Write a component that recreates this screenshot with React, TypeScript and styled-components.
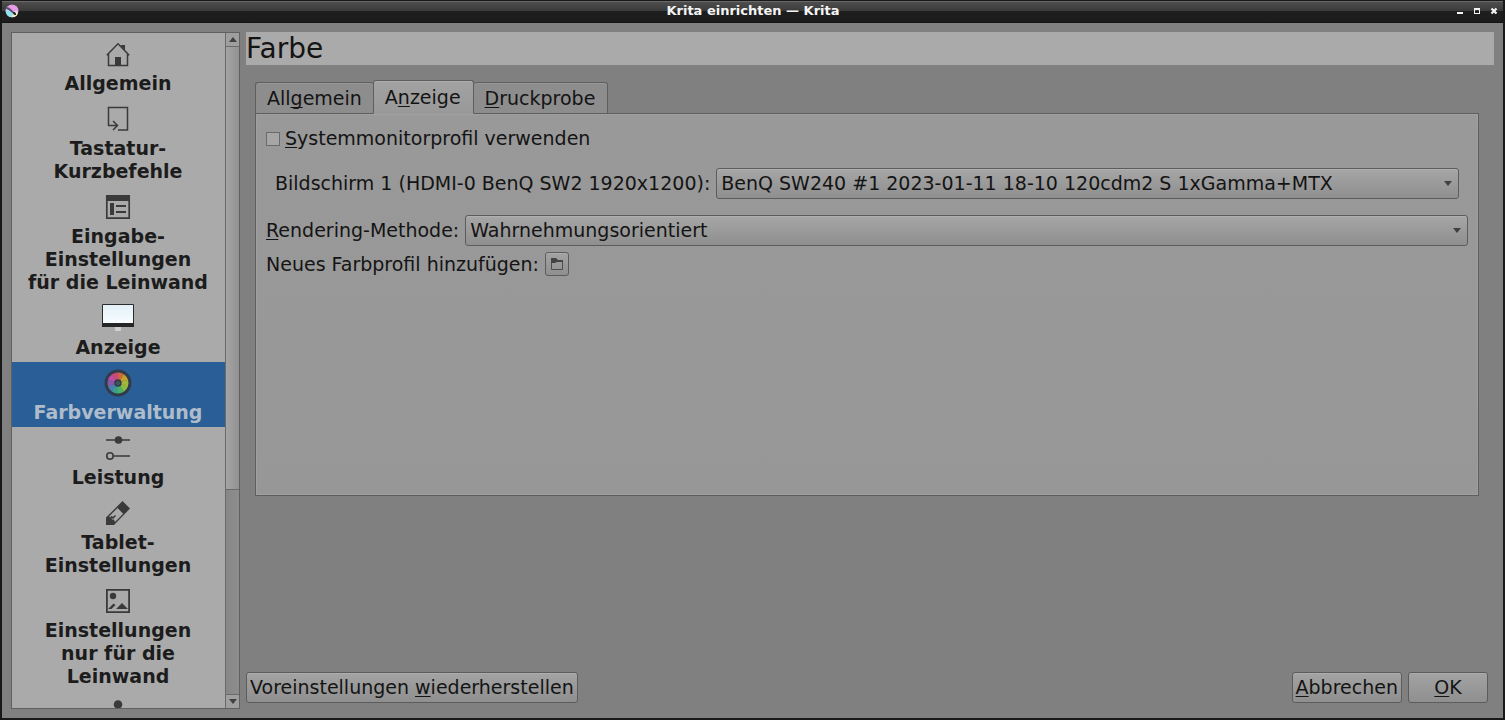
import React, { useState } from "react";
import styled, { createGlobalStyle } from "styled-components";

const GlobalStyle = createGlobalStyle`
  * { box-sizing: border-box; }
  body {
    margin: 0;
    background: #808080;
    color: #141414;
    font-family: "DejaVu Sans", sans-serif;
    font-size: 19px;
    line-height: 23px;
  }
  button, select, input { font: inherit; color: inherit; margin: 0; }
`;

const Frame = styled.div`
  height: 100vh;
  display: flex;
  flex-direction: column;
  border: solid #191919;
  border-width: 0 2px 2px;
  background: #808080;
`;

const TitleBar = styled.header`
  flex: none;
  height: 23px;
  display: flex;
  align-items: center;
  padding: 0 2px 2px 3px;
  border-top: 1px solid #181818;
  border-bottom: 1px solid #141414;
  background: linear-gradient(#6a6a6a 0 1px, #4e4e4e 1px, #3a3a3a 10px, #1f1f1f 10px, #1b1b1b);
  color: #f4f4f4;
`;

const TitleSide = styled.div<{ $end?: boolean }>`
  flex: 1;
  display: flex;
  align-items: center;
  justify-content: ${(p) => (p.$end ? "flex-end" : "flex-start")};
  gap: 3px;
`;

const WindowTitle = styled.div`
  font-size: 13px;
  font-weight: bold;
  line-height: 16px;
`;

const WindowButton = styled.button`
  width: 14px;
  height: 14px;
  padding: 0;
  border: 0;
  background: none;
  display: grid;
  place-items: center;
`;

const Body = styled.div`
  flex: 1;
  min-height: 0;
  display: flex;
  gap: 6px;
  padding: 9px;
`;

const Sidebar = styled.nav`
  flex: none;
  width: 229px;
  display: flex;
  border: 1px solid #606060;
  background: #aaaaaa;
`;

const PageList = styled.div`
  flex: 1;
  overflow: hidden;
`;

const PageItem = styled.button<{ $active: boolean }>`
  width: 100%;
  display: flex;
  flex-direction: column;
  align-items: center;
  gap: 2px;
  padding: 5px 13px 3px 12px;
  border: 0;
  background: ${(p) => (p.$active ? "#295f96" : "transparent")};
  color: ${(p) => (p.$active ? "#aebccb" : "#1c1c1c")};
  font-weight: bold;
  text-align: center;
  white-space: pre-line;

  svg { display: block; }
`;

const ScrollBar = styled.div`
  flex: none;
  width: 14px;
  display: flex;
  flex-direction: column;
  border-left: 1px solid #6a6a6a;
  background: #8a8a8a;
`;

const ScrollArrow = styled.button<{ $down?: boolean }>`
  flex: none;
  height: 14px;
  padding: 0;
  border: solid #6a6a6a;
  border-width: ${(p) => (p.$down ? "1px 0 0" : "0 0 1px")};
  background: #9f9f9f;
  display: grid;
  place-items: center;
`;

const ScrollThumb = styled.div`
  flex: 443;
  border-bottom: 1px solid #6a6a6a;
  background: linear-gradient(90deg, #a4a4a4, #929292);
`;

const ScrollTrough = styled.div`
  flex: 204;
  background: linear-gradient(90deg, #868686, #8e8e8e);
`;

const Main = styled.main`
  flex: 1;
  min-width: 0;
  display: flex;
  flex-direction: column;
`;

const PageTitle = styled.h1`
  margin: 0;
  background: #aaaaaa;
  font-size: 28px;
  font-weight: normal;
  line-height: 33px;
`;

const TabArea = styled.section`
  flex: 1;
  padding: 15px 15px 0 9px;
`;

const TabList = styled.div`
  display: flex;
  align-items: flex-end;
  margin-bottom: -1px;
`;

const Tab = styled.button<{ $active: boolean }>`
  height: ${(p) => (p.$active ? 34 : 32)}px;
  padding: 0 11px;
  position: relative;
  border: solid #5e5e5e;
  border-width: ${(p) => (p.$active ? "1px" : "1px 0 1px 1px")};
  border-bottom-color: ${(p) => (p.$active ? "#999999" : "#5e5e5e")};
  border-radius: 3px 3px 0 0;
  background: ${(p) => (p.$active ? "linear-gradient(#a2a2a2, #999999)" : "#8d8d8d")};
  box-shadow: inset 0 1px ${(p) => (p.$active ? "#adadad" : "#989898")};

  & + & { padding: 0 12px 0 11px; }
  &:last-child { border-width: 1px 1px 1px 0; }
`;

const Panel = styled.div`
  min-height: 383px;
  padding: 13px 10px;
  display: flex;
  flex-direction: column;
  border: 1px solid #5e5e5e;
  background: linear-gradient(#999999, #979797);
  box-shadow: inset 0 0 0 1px #a0a0a0;
`;

const CheckRow = styled.label`
  display: flex;
  align-items: center;
  gap: 5px;
`;

const CheckBox = styled.input`
  appearance: none;
  width: 14px;
  height: 14px;
  border: 1px solid #6a6a6a;
  background: #a6a6a6;

  &:checked { background: #295f96; }
`;

const Row = styled.div<{ $inset?: boolean }>`
  display: flex;
  align-items: center;
  gap: 6px;
  margin-top: ${(p) => (p.$inset ? 18 : 16)}px;
  padding: 0 ${(p) => (p.$inset ? 9 : 0)}px;
`;

const ImportRow = styled.div`
  display: flex;
  align-items: center;
  gap: 6px;
  margin-top: 6px;
`;

const SelectBox = styled.div`
  flex: 1;
  min-width: 0;
  position: relative;
  display: flex;

  svg {
    position: absolute;
    right: 7px;
    top: 13px;
    pointer-events: none;
  }
`;

const Select = styled.select`
  appearance: none;
  width: 100%;
  height: 31px;
  padding: 0 24px 0 4px;
  border: 1px solid #5c5c5c;
  border-radius: 3px;
  background: linear-gradient(#a6a6a6, #8f8f8f);
  box-shadow: inset 0 1px #b0b0b0;
`;

const PushButton = styled.button<{ $wide?: boolean }>`
  height: 31px;
  min-width: ${(p) => (p.$wide ? 80 : 0)}px;
  padding: 0 3px;
  border: 1px solid #5c5c5c;
  border-radius: 3px;
  background: linear-gradient(#a3a3a3, #8f8f8f);
  box-shadow: inset 0 1px #adadad;
`;

const ToolButton = styled(PushButton)`
  width: 24px;
  height: 24px;
  padding: 0;
  display: grid;
  place-items: center;
`;

const Footer = styled.footer`
  display: flex;
  gap: 6px;
  padding: 0 6px 6px 0;
`;

const Spacer = styled.div`
  flex: 1;
`;

const Key = styled.u`
  text-decoration-thickness: 1px;
  text-underline-offset: 2px;
  text-decoration-skip-ink: none;
`;

const INK = "#3a3a3a";

function Icon({ children }: { children: React.ReactNode }) {
  return (
    <svg width="32" height="32" viewBox="0 0 32 32" fill="none" stroke={INK} aria-hidden="true">
      {children}
    </svg>
  );
}

const HomeIcon = () => (
  <Icon>
    <path d="M6.5 15.5V27.5H25.5V15.5M4.8 17.2L16 5.7L27.2 17.2" strokeWidth="1.5" />
    <path d="M18.5 7H23V13Z" fill={INK} stroke="none" />
    <path d="M13 19h6v8h-6z" fill={INK} stroke="none" />
  </Icon>
);

const ShortcutIcon = () => (
  <Icon>
    <path d="M6.5 22.5V4.5H25.5V27H16M6 22.5H15M11 18L15.5 22.5L11 27" strokeWidth="1.5" />
  </Icon>
);

const FormIcon = () => (
  <Icon>
    <path d="M4.8 4.8h22.4v22.4H4.8z" strokeWidth="1.7" />
    <path d="M4 4h24v6H4zM8 12h4v12H8z" fill={INK} stroke="none" />
    <path d="M14 15h10M14 21h10" strokeWidth="2" />
  </Icon>
);

const MonitorIcon = () => (
  <Icon>
    <defs>
      <linearGradient id="screen" x1="0" y1="0" x2="0" y2="1">
        <stop offset="0" stopColor="#e3f1f8" />
        <stop offset="1" stopColor="#fafdff" />
      </linearGradient>
    </defs>
    <path d="M13 25h6v4h-6z" fill="#d0d0d0" stroke="none" />
    <path d="M.5 2.5h31v21H.5z" fill="url(#screen)" stroke="#2b2b2b" />
    <path d="M0 21h32v4H0z" fill="#262626" stroke="none" />
  </Icon>
);

const wheel: [number, string][] = [
  [-90, "#c86a3a"],
  [-54, "#c2a032"],
  [-18, "#a3b83b"],
  [18, "#8fbb41"],
  [54, "#4faf62"],
  [90, "#3c9f8d"],
  [126, "#4d7fae"],
  [162, "#8559a9"],
  [198, "#bd4aa4"],
  [234, "#cb4b70"],
];

const wheelPoint = (angle: number) => {
  const a = (angle * Math.PI) / 180;
  return `${16 + 10.5 * Math.cos(a)} ${16 + 10.5 * Math.sin(a)}`;
};

const ColorIcon = () => (
  <Icon>
    <circle cx="16" cy="16" r="13.5" fill="#303c49" stroke="none" />
    {wheel.map(([angle, color]) => (
      <path
        key={angle}
        d={`M16 16L${wheelPoint(angle)}A10.5 10.5 0 0 1 ${wheelPoint(angle + 38)}Z`}
        fill={color}
        stroke="none"
      />
    ))}
    <circle cx="16" cy="16" r="2.6" fill="#7d9a7b" stroke="#2e3c48" strokeWidth="2.2" />
    <circle cx="16" cy="16" r="1" fill="#2e3c48" stroke="none" />
  </Icon>
);

const SlidersIcon = () => (
  <Icon>
    <path d="M4 8h24M11 24h17" strokeWidth="1.6" />
    <circle cx="16.5" cy="8" r="3.8" fill={INK} stroke="none" />
    <circle cx="8" cy="24" r="3.2" strokeWidth="1.6" />
  </Icon>
);

const PencilIcon = () => (
  <Icon>
    <path
      d="M20.5 4L28 11.5L12 28H4V20.5ZM15.5 11L21.2 16.7L13 25L12 22.5H10L9.5 20.5L7 19.5Z"
      fill={INK}
      fillRule="evenodd"
      stroke="none"
    />
    <path d="M9 19.5L11 21L13.5 18.5" strokeWidth="1.6" />
  </Icon>
);

const ImageIcon = () => (
  <Icon>
    <path d="M4.9 4.9h22.2v22.2H4.9z" strokeWidth="1.8" />
    <circle cx="11" cy="11" r="3.2" fill={INK} stroke="none" />
    <path d="M14 24L20 18L26 24zM6 24L11.5 18.5L13.5 20L9.5 24z" fill={INK} stroke="none" />
  </Icon>
);

const PersonIcon = () => (
  <Icon>
    <circle cx="16" cy="8.5" r="4.3" fill={INK} stroke="none" />
    <path d="M6 28c0-14 20-14 20 0z" fill={INK} stroke="none" />
  </Icon>
);

const FolderIcon = () => (
  <svg width="12" height="12" viewBox="0 0 12 12" aria-hidden="true">
    <path d="M.5 2.5h11v9H.5z" fill="none" stroke="#4c4c4c" />
    <path d="M0 0h5l2 2h5v2H6L4 5H0z" fill="#444444" />
  </svg>
);

const KritaIcon = () => (
  <svg width="14" height="14" viewBox="0 0 14 14" aria-hidden="true">
    <circle cx="7" cy="7" r="6.3" fill="#e9d6f1" />
    <path d="M2 3.2A6.3 6.3 0 0 1 13.3 7L8 7Z" fill="#e79be6" />
    <path d="M.7 6A6.3 6.3 0 0 0 7 13.3L8 8Z" fill="#8fe3ef" />
    <path d="M7 13.3A6.3 6.3 0 0 0 13 9L9 8Z" fill="#f1edbd" />
    <path d="M.8 5L2 3C5 4 7 5.5 8 7.5L6.5 8.5C5 6.5 3 5.5 .8 5Z" fill="#5b4f80" />
    <path d="M7 7.5C9 7 11.5 8.5 11 11C9.5 11 8 10.5 7 7.5Z" fill="#22202c" />
  </svg>
);

const Arrow = ({ up = false }: { up?: boolean }) => (
  <svg width="8" height="5" viewBox="0 0 8 5" aria-hidden="true">
    <path d={up ? "M0 5L4 0L8 5Z" : "M0 0H8L4 5Z"} fill="#404040" />
  </svg>
);

const pages = [
  { id: "general", label: "Allgemein", icon: <HomeIcon /> },
  { id: "shortcuts", label: "Tastatur-\nKurzbefehle", icon: <ShortcutIcon /> },
  { id: "input", label: "Eingabe-\nEinstellungen\nfür die Leinwand", icon: <FormIcon /> },
  { id: "display", label: "Anzeige", icon: <MonitorIcon /> },
  { id: "color", label: "Farbverwaltung", icon: <ColorIcon /> },
  { id: "performance", label: "Leistung", icon: <SlidersIcon /> },
  { id: "tablet", label: "Tablet-\nEinstellungen", icon: <PencilIcon /> },
  { id: "canvas", label: "Einstellungen\nnur für die\nLeinwand", icon: <ImageIcon /> },
  { id: "author", label: "", icon: <PersonIcon /> },
];

export default function App() {
  const [page, setPage] = useState("color");
  const [tab, setTab] = useState("display");
  const tabs = [
    { id: "general", label: <>All<Key>g</Key>emein</> },
    { id: "display", label: <>A<Key>n</Key>zeige</> },
    { id: "proof", label: <><Key>D</Key>ruckprobe</> },
  ];

  return (
    <>
      <GlobalStyle />
      <Frame>
        <TitleBar>
          <TitleSide><KritaIcon /></TitleSide>
          <WindowTitle>Krita einrichten — Krita</WindowTitle>
          <TitleSide $end>
            <WindowButton aria-label="Minimieren">
              <svg width="8" height="8" viewBox="0 0 8 8"><path d="M1 5h6v2H1z" fill="#f4f4f4" /></svg>
            </WindowButton>
            <WindowButton aria-label="Maximieren">
              <svg width="8" height="8" viewBox="0 0 8 8"><path d="M1 1h6v6H1zM2 3v3h4V3z" fill="#f4f4f4" fillRule="evenodd" /></svg>
            </WindowButton>
            <WindowButton aria-label="Schließen">
              <svg width="8" height="8" viewBox="0 0 8 8"><path d="M1.5 1.5l5 5M6.5 1.5l-5 5" stroke="#f4f4f4" strokeWidth="2.2" /></svg>
            </WindowButton>
          </TitleSide>
        </TitleBar>
        <Body>
          <Sidebar>
            <PageList>
              {pages.map((p) => (
                <PageItem key={p.id} $active={p.id === page} onClick={() => setPage(p.id)}>
                  {p.icon}
                  <span>{p.label}</span>
                </PageItem>
              ))}
            </PageList>
            <ScrollBar>
              <ScrollArrow aria-label="Nach oben"><Arrow up /></ScrollArrow>
              <ScrollThumb />
              <ScrollTrough />
              <ScrollArrow $down aria-label="Nach unten"><Arrow /></ScrollArrow>
            </ScrollBar>
          </Sidebar>
          <Main>
            <PageTitle>Farbe</PageTitle>
            <TabArea>
              <TabList role="tablist">
                {tabs.map((t) => (
                  <Tab key={t.id} role="tab" aria-selected={t.id === tab} $active={t.id === tab} onClick={() => setTab(t.id)}>
                    {t.label}
                  </Tab>
                ))}
              </TabList>
              <Panel role="tabpanel">
                <CheckRow>
                  <CheckBox type="checkbox" />
                  <span><Key>S</Key>ystemmonitorprofil verwenden</span>
                </CheckRow>
                <Row $inset>
                  <label htmlFor="screen-profile">Bildschirm 1 (HDMI-0 BenQ SW2 1920x1200):</label>
                  <SelectBox>
                    <Select id="screen-profile">
                      <option>BenQ SW240 #1 2023-01-11 18-10 120cdm2 S 1xGamma+MTX</option>
                    </Select>
                    <Arrow />
                  </SelectBox>
                </Row>
                <Row>
                  <label htmlFor="intent"><Key>R</Key>endering-Methode:</label>
                  <SelectBox>
                    <Select id="intent">
                      <option>Wahrnehmungsorientiert</option>
                    </Select>
                    <Arrow />
                  </SelectBox>
                </Row>
                <ImportRow>
                  <label htmlFor="import-profile">Neues Farbprofil hinzufügen:</label>
                  <ToolButton id="import-profile"><FolderIcon /></ToolButton>
                </ImportRow>
              </Panel>
            </TabArea>
            <Footer>
              <PushButton>Voreinstellungen <Key>w</Key>iederherstellen</PushButton>
              <Spacer />
              <PushButton><Key>A</Key>bbrechen</PushButton>
              <PushButton $wide><Key>O</Key>K</PushButton>
            </Footer>
          </Main>
        </Body>
      </Frame>
    </>
  );
}
